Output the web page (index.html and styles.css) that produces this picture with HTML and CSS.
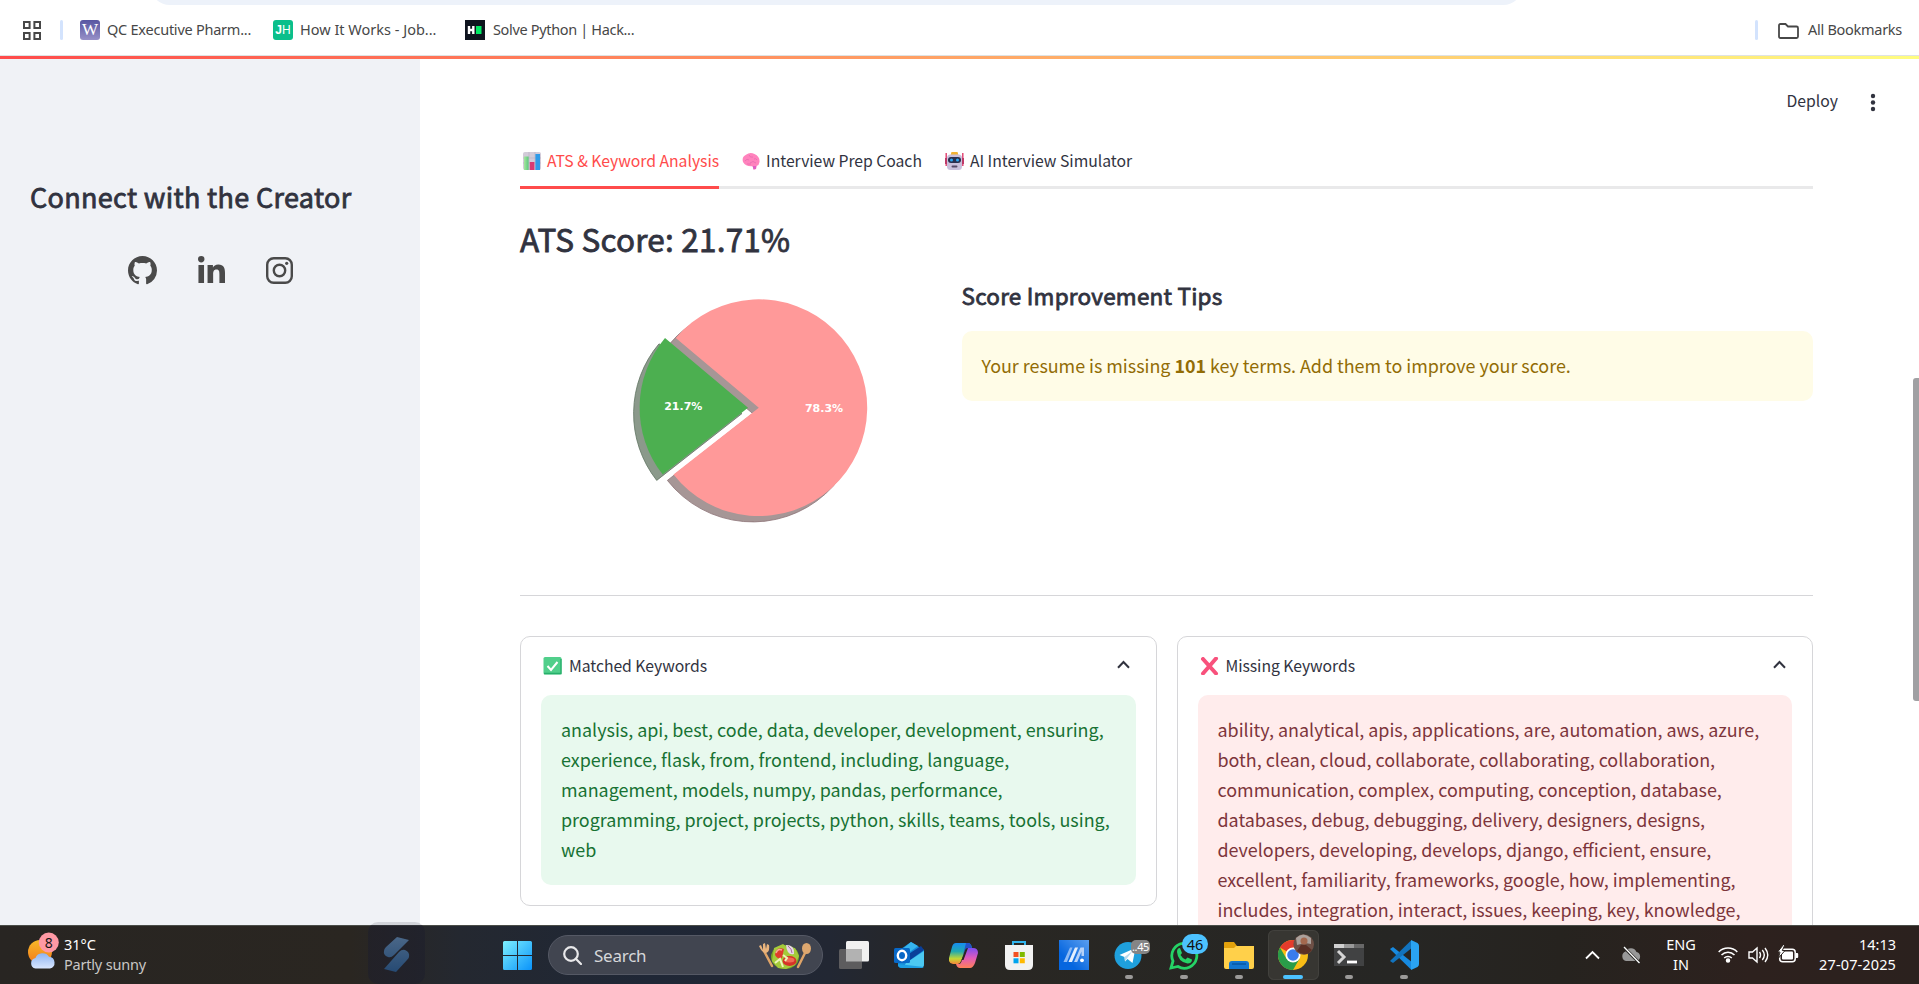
FILE: index.html
```html
<!DOCTYPE html>
<html lang="en">
<head>
<meta charset="utf-8">
<title>ATS Score</title>
<link rel="stylesheet" href="styles.css">
</head>
<body>
<header class="bookmarks">
  <div class="omnibox"></div>
  <svg class="apps" width="18" height="19" viewBox="0 0 18 19" fill="none" stroke="#474747" stroke-width="2"><rect x="1" y="1" width="5.6" height="6"/><rect x="11.4" y="1" width="5.6" height="6"/><rect x="1" y="12" width="5.6" height="6"/><rect x="11.4" y="12" width="5.6" height="6"/></svg>
  <span class="bar-sep"></span>
  <div class="bookmark bm-one"><span class="fav fav-w">W</span><span class="bm-text t-qc">QC Executive Pharm...</span></div>
  <div class="bookmark bm-two"><span class="fav fav-jh">J<small>H</small></span><span class="bm-text t-how">How It Works - Job...</span></div>
  <div class="bookmark bm-three"><svg class="fav" viewBox="0 0 20 20"><rect width="20" height="20" fill="#0e141e"/><path d="M4 6v8M8.300 6v8M4 10h4" stroke="#fff" stroke-width="2.400"/><rect x="11" y="6" width="5.500" height="8" fill="#00ea64"/></svg><span class="bm-text t-solve">Solve Python | Hack...</span></div>
  <div class="all-bookmarks"><span class="bar-sep"></span><svg width="21" height="16" viewBox="0 0 21 16" fill="none" stroke="#474747" stroke-width="1.800"><path d="M2.500 1h5l2.500 2.500h8.500q1.500 0 1.500 1.500v8.500q0 1.500-1.500 1.500H2.500Q1 15 1 13.500v-11Q1 1 2.500 1z"/></svg><span class="bm-text t-all">All Bookmarks</span></div>
</header>
<div class="accent"></div>
<div class="app">
  <aside class="sidebar">
    <h2 class="side-title">Connect with the Creator</h2>
    <nav class="social">
      <svg width="29" height="29" viewBox="0 0 16 16"><path d="M8 0C3.58 0 0 3.58 0 8c0 3.54 2.29 6.53 5.47 7.59.4.07.55-.17.55-.38 0-.19-.01-.82-.01-1.49-2.01.37-2.53-.49-2.69-.94-.09-.23-.48-.94-.82-1.13-.28-.15-.68-.52-.01-.53.63-.01 1.08.58 1.23.82.72 1.21 1.87.87 2.33.66.07-.52.28-.87.51-1.07-1.78-.2-3.64-.89-3.64-3.95 0-.87.31-1.59.82-2.15-.08-.2-.36-1.02.08-2.12 0 0 .67-.21 2.200.82.64-.18 1.320-.27 2-.27.68 0 1.360.09 2 .27 1.530-1.040 2.200-.82 2.200-.82.44 1.100.16 1.920.08 2.120.51.56.82 1.270.82 2.150 0 3.070-1.870 3.750-3.650 3.950.29.25.54.73.54 1.480 0 1.070-.01 1.930-.01 2.200 0 .21.15.46.55.38A8.013 8.013 0 0016 8c0-4.420-3.580-8-8-8z"/></svg>
      <svg width="27" height="27" viewBox="0 0 448 448"><path d="M100.280 448H7.400V148.900h92.880zM53.790 108.100C24.090 108.100 0 83.500 0 53.800a53.790 53.790 0 0 1 107.580 0c0 29.700-24.100 54.300-53.790 54.300zM447.900 448h-92.680V302.400c0-34.700-.7-79.200-48.290-79.200-48.290 0-55.690 37.700-55.690 76.700V448h-92.780V148.900h89.080v40.800h1.300c12.400-23.500 42.690-48.300 87.880-48.300 94 0 111.280 61.900 111.280 142.300V448z"/></svg>
      <svg class="insta" width="27" height="27" viewBox="0 0 27 27"><g fill="none" stroke="#4a4a4a" stroke-width="2.400"><rect x="1.200" y="1.200" width="24.600" height="24.600" rx="6.500"/><circle cx="13.500" cy="13.500" r="5.700"/></g><circle cx="20.700" cy="6.300" r="1.600"/></svg>
    </nav>
  </aside>
  <main class="main">
    <div class="toolbar"><span class="t-deploy">Deploy</span><svg width="6" height="20" viewBox="0 0 6 20" fill="#31333f"><circle cx="3" cy="3" r="2.200"/><circle cx="3" cy="9.500" r="2.200"/><circle cx="3" cy="16" r="2.200"/></svg></div>
    <div class="content">
      <div class="tabs">
        <div class="tab active"><svg width="18" height="18" viewBox="0 0 18 18"><defs><linearGradient id="cb"><stop stop-color="#a8e6a0"/><stop offset="1" stop-color="#5cc97e"/></linearGradient></defs><rect width="18" height="18" rx="2" fill="#d3ccd9"/><path d="M0 6h18M0 11h18M6 0v18M12 0v18" stroke="#bcb3c4" stroke-width=".7"/><rect x="1" y="4.500" width="4.600" height="13.500" fill="url(#cb)"/><rect x="6.800" y="10" width="4.600" height="8" fill="#d63b74"/><rect x="12.400" y="2" width="4.600" height="16" fill="#2f9be8"/></svg><span class="t-tab1">ATS &amp; Keyword Analysis</span></div>
        <div class="tab"><svg width="18" height="18" viewBox="0 0 18 18"><path d="M1 10Q-.5 5 4 2.800 8-.5 12.500 2 18 4.500 17.500 10q-.2 3-3 4l-.4 3-2.500.5-.8-3.300Q4 15 1 10z" fill="#ff83bd"/><path d="M3 9q2-3 4-1M7 3q1 3 4 2M8 11q3-3 6 0M12 7q2-1 3 1M5 12h4" fill="none" stroke="#e66cb0" stroke-width=".8"/><path d="M10.500 14l1 3.500 2.400-.5.4-3z" fill="#e060c4"/></svg><span class="t-tab2">Interview Prep Coach</span></div>
        <div class="tab"><svg width="19" height="18" viewBox="0 0 19 18"><path d="M1.200 1v13M17.800 1v13" stroke="#df3c6c" stroke-width="1.400"/><path d="M0 6h2v6H0zM17 6h2v6h-2z" fill="#bd3a68"/><path d="M6.500 0h6l1 3.500h-8z" fill="#f2b233"/><rect x="2" y="2.500" width="15" height="15.500" rx="3.500" fill="#c9c0dc"/><rect x="3" y="5" width="13" height="6" rx="3" fill="#29304f"/><circle cx="6.500" cy="8" r="1.500" fill="#2ea8f5"/><circle cx="12.500" cy="8" r="1.500" fill="#2ea8f5"/><rect x="6.500" y="13.500" width="6" height="2" rx="1" fill="#564a68"/></svg><span class="t-tab3">AI Interview Simulator</span></div>
      </div>
      <h1 class="score">ATS Score: 21.71%</h1>
      <div class="overview">
        <svg class="pie" viewBox="520 280 422 260">
          <g stroke-width=".8">
            <path d="M752.700 413.500L669.700 343.800A108.400 108.400 0 1 1 667.400 480.400Z" fill="#a69696" stroke="#8d7377"/>
            <path d="M742 413.500L656.700 480.400A108.400 108.400 0 0 1 659 343.800Z" fill="#8b998b" stroke="#5f7461"/>
          </g>
          <path d="M758.800 407.700L673.500 474.600A108.400 108.400 0 1 0 675.800 338Z" fill="#f99"/>
          <path d="M748 407.700L662.700 474.600A108.400 108.400 0 0 1 665 338Z" fill="#4caf50"/>
          <text x="683.300" y="410">21.7%</text><text x="824" y="412.300">78.3%</text>
        </svg>
        <section class="tips">
          <h3 class="tips-title">Score Improvement Tips</h3>
          <p class="alert warn">Your resume is missing <strong>101</strong> key terms. Add them to improve your score.</p>
        </section>
      </div>
      <hr class="rule">
      <div class="cards">
        <section class="card">
          <div class="card-head"><svg width="19" height="18" viewBox="0 0 19 18"><rect x=".5" width="18" height="17.500" rx="1.500" fill="#51cf8b"/><path d="M1 16.500h17V2" fill="none" stroke="#27ae6a" stroke-width="1.300"/><path d="M4.500 9l3.500 4 6.500-8" fill="none" stroke="#fff" stroke-width="2"/></svg><span class="t-match">Matched Keywords</span><svg class="chev" width="13" height="9" viewBox="0 0 13 9"><path d="M1 7.800L6.500 2 12 7.800" fill="none" stroke="#31333f" stroke-width="2"/></svg></div>
          <p class="alert ok"><span class="k1">analysis, api, best, code, data, developer, development, ensuring,<br>experience, flask, from, frontend, including, language,<br>management, models, numpy, pandas, performance,<br>programming, project, projects, python, skills, teams, tools, using,<br>web</span></p>
        </section>
        <section class="card">
          <div class="card-head"><svg width="19" height="18" viewBox="0 0 19 18"><path d="M3 2l13 14.500M16 1.500L3 16.500" stroke="#f8517c" stroke-width="4" stroke-linecap="round"/></svg><span class="t-miss">Missing Keywords</span><svg class="chev" width="13" height="9" viewBox="0 0 13 9"><path d="M1 7.800L6.500 2 12 7.800" fill="none" stroke="#31333f" stroke-width="2"/></svg></div>
          <p class="alert bad"><span class="k2">ability, analytical, apis, applications, are, automation, aws, azure,<br>both, clean, cloud, collaborate, collaborating, collaboration,<br>communication, complex, computing, conception, database,<br>databases, debug, debugging, delivery, designers, designs,<br>developers, developing, develops, django, efficient, ensure,<br>excellent, familiarity, frameworks, google, how, implementing,<br>includes, integration, interact, issues, keeping, key, knowledge,</span></p>
        </section>
      </div>
    </div>
    <div class="scroll-thumb"></div>
  </main>
</div>
<footer class="taskbar">
  <div class="weather">
    <svg width="34" height="40" viewBox="0 0 34 40"><defs><linearGradient id="sun" x2="0" y2="1"><stop stop-color="#f6b928"/><stop offset="1" stop-color="#f4791b"/></linearGradient><linearGradient id="cl" x2="0" y2="1"><stop stop-color="#8eb4f0"/><stop offset="1" stop-color="#d8e6ff"/></linearGradient></defs><circle cx="12" cy="20" r="12" fill="url(#sun)"/><path d="M7.500 36.500a5.400 5.400 0 0 1 0-10.600 7.500 7 0 0 1 13.500-1.200 6 6 0 0 1 1 11.800z" fill="url(#cl)"/><circle cx="20.800" cy="10.500" r="10" fill="#ff99a4"/><text x="20.800" y="15.600">8</text></svg>
    <div class="weather-text"><span class="t-temp">31°C</span><span class="dim t-sunny">Partly sunny</span></div>
  </div>
  <div class="tile"><svg width="27" height="35" viewBox="0 0 27 35"><defs><linearGradient id="sg" x2="0" y2="1"><stop stop-color="#4a6788"/><stop offset="1" stop-color="#264a73"/></linearGradient></defs><path d="M14 0L26 3 11 18q-3 3-6 2-5-2-4-6 0-2 2-4zM13 35L1 32 16 15q3-3 6-2 5 2 4 7 0 1-2 3z" fill="url(#sg)"/></svg></div>
  <svg class="start" width="29" height="29" viewBox="0 0 29 29"><defs><linearGradient id="win" x2="1" y2="1"><stop stop-color="#7df0ff"/><stop offset="1" stop-color="#0a93fa"/></linearGradient></defs><path d="M1.500 0H14v14H0V1.500Q0 0 1.500 0zM15 0h12.500Q29 0 29 1.500V14H15zM0 15h14v14H1.500Q0 29 0 27.500zM15 15h14v12.500q0 1.500-1.500 1.500H15z" fill="url(#win)"/></svg>
  <div class="search">
    <svg width="19" height="19" viewBox="0 0 19 19" fill="none" stroke="#e8e8ea" stroke-width="2.200"><circle cx="8" cy="8" r="6.800"/><path d="M12.800 12.800l5.200 5.200" stroke-linecap="round"/></svg>
    <span class="t-search">Search</span>
    <svg class="salad" width="52" height="27" viewBox="0 0 52 27"><path d="M5 8l8 15" stroke="#dfa468" stroke-width="2.500" stroke-linecap="round"/><path d="M0 3l2-1 2 5 0-6 2-1 1 6 1-5 2 1q1 7-3 8-4 0-7-7z" fill="#e9b47d"/><ellipse cx="26" cy="14" rx="14" ry="12" fill="#75a823"/><path d="M15 5l9-4 4 3 8 1 4 8-4 9-9 4-8-1-6-7z" fill="#a5cb3a"/><path d="M16 12q1-9 9-6l-2 9q-4 2-7-3z" fill="#df3c2d"/><path d="M17 10q2-5 6-3" fill="none" stroke="#f7ab95" stroke-width="1.500"/><ellipse cx="30.500" cy="18" rx="7" ry="5" fill="#d63328"/><ellipse cx="30.500" cy="17" rx="5" ry="2.500" fill="#f06b53"/><path d="M27 2q9 0 8 9-7 2-8-9z" fill="#e8d6e7"/><path d="M29 3q4 3 4 7" fill="none" stroke="#a56b9d"/><path d="M16 20l5-4 3 8M24 12l4 3-2 3" stroke="#edf5b9" stroke-width="2" fill="none"/><path d="M39 24l8-16" stroke="#dfa468" stroke-width="2.500" stroke-linecap="round"/><ellipse cx="47.500" cy="5.500" rx="4.500" ry="5.500" fill="#dda76f"/></svg>
  </div>
  <div class="dock">
    <div class="slot"><svg width="30" height="30" viewBox="0 0 30 30"><rect x="7" y="1" width="23" height="20.500" rx="1.500" fill="#f1f1f1"/><rect y="9" width="23" height="20" rx="1.500" fill="#5d5c5e"/><rect x="7" y="9" width="16" height="12.500" fill="#b2b2b2"/></svg></div>
    <div class="slot"><svg width="30" height="30" viewBox="0 0 30 30"><path d="M4 11L17 2l13 8v14q0 4-4 4H8q-4 0-4-4z" fill="#168bd8"/><path d="M6 11L17 2l7 4-14 10z" fill="#36b5ee"/><path d="M10 17L27 6l3 4-18 13z" fill="#0a3f99"/><path d="M12 23l18-12v13q0 4-4 4H9z" fill="#4cc9f2"/><path d="M4 24l26 3q-1 1-4 1H8q-3 0-4-2z" fill="#1e9fe2"/><rect y="8" width="16" height="15" rx="1.500" fill="#0868c7"/><ellipse cx="8" cy="15.500" rx="4.200" ry="4.700" fill="none" stroke="#fff" stroke-width="2.400"/></svg></div>
    <div class="slot"><svg width="30" height="30" viewBox="0 0 30 30"><defs><linearGradient id="c1" x2="0" y2="1"><stop stop-color="#168cf0"/><stop offset=".4" stop-color="#20a9b0"/><stop offset=".75" stop-color="#c5d733"/><stop offset="1" stop-color="#f6853a"/></linearGradient><linearGradient id="c2" x2="0" y2="1"><stop stop-color="#7e4df0"/><stop offset=".5" stop-color="#e15bb9"/><stop offset="1" stop-color="#ff8058"/></linearGradient></defs><path d="M7 3h12q3 0 4 5h-4q-2 0-3 4l-4 9q-1 3-3 3H4q-5-1-4-6L3 7q1-4 4-4z" fill="url(#c1)"/><path d="M19 8h5q5 0 5 5l-3 10q-2 5-5 5H11q-3 0-4-4h3q2 0 3-4l3-9q1-3 3-3z" fill="url(#c2)"/><path d="M17 3h2q3 0 4 5h-4q-3 0-4 5l-1 2z" fill="#2451c9"/><path d="M12.500 20l3.500-10q.5-2 3-2l-4.500 12z" fill="#292622"/></svg></div>
    <div class="slot"><svg width="30" height="30" viewBox="0 0 30 30"><path d="M9 6V2h12v4" fill="none" stroke="#31b4ed" stroke-width="2"/><path d="M1 5h28v20q0 5-5 5H6q-5 0-5-5z" fill="#f2f2f2"/><path d="M9.500 12H14.500v5H9.500z" fill="#f25022"/><path d="M15.800 12h5v5h-5z" fill="#7fba00"/><path d="M9.500 18.300h5v5h-5z" fill="#00a4ef"/><path d="M15.800 18.300h5v5h-5z" fill="#ffb900"/></svg></div>
    <div class="slot"><svg width="30" height="30" viewBox="0 0 30 30"><defs><linearGradient id="mg" x1="0" y1="1" x2="1" y2="0"><stop offset=".3" stop-color="#0666df"/><stop offset="1" stop-color="#5a9eef"/></linearGradient></defs><rect width="30" height="30" fill="url(#mg)"/><path d="M4.500 22L11 7.500h2.500L8 22z" fill="#8dbaf5"/><path d="M9.500 22L16 7.500h3L13 22z" fill="#e4effd"/><path d="M15 22l6.500-14.500H25V16h-2.500v-4.500L18.200 22z" fill="#b5d1f8"/><circle cx="23" cy="20.300" r="1.900" fill="#fff"/></svg></div>
    <div class="slot"><svg width="30" height="30" viewBox="0 0 30 30"><circle cx="14" cy="15.500" r="13.500" fill="#1fa0dc"/><path d="M5.500 15l16-7-3 15-5-4-2.500 2.500-.5-4.500z" fill="#fff"/><path d="M10.500 17l8-6-6 8-1.500 2.500z" fill="#b7d9ed"/></svg><span class="badge gray">..45</span><i class="dot"></i></div>
    <div class="slot"><svg width="30" height="30" viewBox="0 0 30 30"><path d="M2 28l2-7A12.500 12.500 0 1 1 9 26.500z" fill="none" stroke="#25d366" stroke-width="2.800"/><path d="M8 12q0-4 3-4l2 5-1.500 2q2 3.500 5 4.500l2-2 4.500 2q0 4-4.500 4Q9 22 8 12z" fill="#25d366"/></svg><span class="badge blue">46</span><i class="dot"></i></div>
    <div class="slot"><svg width="30" height="30" viewBox="0 0 30 30"><path d="M0 3q0-1 1-1h9l3 4v4H0z" fill="#e2a10c"/><path d="M0 8h10l2-2h18v21q0 2-2 2H2q-2 0-2-2z" fill="#ffd04a"/><path d="M5 29v-5q0-3 3-3h14q3 0 3 3v5z" fill="#1375cf"/><path d="M8 24h14" stroke="#08539c" stroke-width="1.300"/></svg><i class="dot"></i></div>
    <div class="slot current"><svg width="36" height="36" viewBox="0 0 36 36"><circle cx="15" cy="21" r="15" fill="#f9bd16"/><path d="M15 21L2 13.500A15 15 0 0 1 28 13.500H15z" fill="#e53b2c"/><path d="M2 13.500A15 15 0 0 0 15 36l6.500-11.300L15 21 8.600 25z" fill="#2a9c49"/><circle cx="15" cy="21" r="7.500" fill="#fff"/><circle cx="15" cy="21" r="5.800" fill="#397cec"/><circle cx="25.700" cy="10.500" r="10.300" fill="#6e5046"/><path d="M18 4q7-7 15 0v6l-6-1-8 2z" fill="#aba19c"/><path d="M19 17l4-6h5l6 5q-6 8-15 1z" fill="#5c2f24"/><circle cx="26" cy="7" r="3.500" fill="#a4684e"/></svg><i class="dot on"></i></div>
    <div class="slot"><svg width="30" height="30" viewBox="0 0 30 30"><path d="M0 4h30v22H0z" fill="#414243"/><path d="M0 4h10v4H0z" fill="#d0d0d0"/><path d="M10 4h10v4H10z" fill="#999"/><path d="M20 4h10v4H20z" fill="#686868"/><path d="M4 11l6 6-6 6" fill="none" stroke="#d5d5d5" stroke-width="3"/><path d="M13 22h10" stroke="#fff" stroke-width="2.800"/></svg><i class="dot"></i></div>
    <div class="slot"><svg width="30" height="30" viewBox="0 0 30 30"><path d="M1 9l3-2 20 16-2 6.500z" fill="#178ae0"/><path d="M1 21l3 2L24 7 22 .5z" fill="#1273bd"/><path d="M22 0l6.500 3Q30 4 30 6v18q0 2-1.500 3L22 30z" fill="#2aa3f2"/></svg><i class="dot"></i></div>
  </div>
  <div class="tray">
    <svg class="up" width="15" height="10" viewBox="0 0 15 10"><path d="M1 8.500L7.500 2 14 8.500" fill="none" stroke="#fff" stroke-width="1.800"/></svg>
    <svg class="cloud" width="21" height="18" viewBox="0 0 21 18"><path d="M5 15a5 5 0 0 1-.5-9.500 6 6 0 0 1 11 .5A4.700 4.700 0 0 1 16 15z" fill="#989898"/><path d="M2.500 1l16 16" stroke="#262522" stroke-width="3"/><path d="M3 1l15.500 16" stroke="#fff" stroke-width="1.300"/></svg>
    <div class="lang"><span>ENG</span><span>IN</span></div>
    <svg class="wifi" width="20" height="17" viewBox="0 0 20 17" fill="none" stroke="#fff" stroke-width="1.500"><path d="M.7 6a13 13 0 0 1 18.600 0M3.500 9a9 9 0 0 1 13 0M6.200 12a5.500 5.500 0 0 1 7.600 0"/><circle cx="10" cy="14.500" r="1.500" fill="#fff"/></svg>
    <svg class="vol" width="21" height="18" viewBox="0 0 21 18" fill="none" stroke="#fff" stroke-width="1.400"><path d="M1 6h3.500L9 2v14l-4.500-4H1z"/><path d="M11.500 6q2 3 0 6M14.300 4q4 5 0 10M17 2q5.500 7 0 14"/></svg>
    <svg class="bat" width="21" height="18" viewBox="0 0 21 18"><rect x="1.700" y="4.200" width="15.500" height="12.500" rx="3" fill="none" stroke="#fff" stroke-width="1.500"/><rect x="4" y="6.500" width="11" height="8" rx="1" fill="#fff"/><path d="M18 8h1.200q1 0 1 1v3q0 1-1 1H18z" fill="#fff"/><path d="M5.500-.5L-.5 7H2l-1.500 6L7 5.500H4.300L7-.5z" fill="#fff" stroke="#2b231f"/></svg>
    <div class="clock"><span class="t-time">14:13</span><span class="t-date">27-07-2025</span></div>
  </div>
</footer>
</body>
</html>
```
FILE: styles.css
```css
* { box-sizing: border-box; }
body { margin: 0; width: 1919px; height: 984px; overflow: hidden; display: flex; flex-direction: column; background: #fff; color: #31333f; font-family: "Noto Sans CJK SC", "Noto Sans", sans-serif; font-size: 15.75px; line-height: 28px; }
svg { display: block; flex: none; }
span { white-space: nowrap; }
h1, h2, h3, p, hr { margin: 0; border: 0; }
h1, h2, h3 { font-weight: 400; -webkit-text-stroke: .8px currentColor; white-space: nowrap; }

.bookmarks { position: relative; flex: none; height: 56px; padding: 19px 17px 0 23px; display: flex; align-items: flex-start; border-bottom: 1px solid #dfe3e3; }
.omnibox { position: absolute; left: 150px; top: -35px; width: 1373px; height: 40px; border-radius: 20px; background: #edf2fa; }
.apps { margin-top: 2px; }
.bar-sep { width: 3px; height: 20px; margin: 1px 0 0 19px; border-radius: 2px; background: #d3e3fd; }
.bookmark { display: flex; gap: 8px; }
.bm-one { margin-left: 17px; width: 193px; gap: 7px; }
.bm-two { width: 192px; gap: 7px; }
.bm-text { font: 14.5px/20px "Noto Sans", sans-serif; color: #474747; }
.t-qc { letter-spacing: -.24px; }
.t-solve { letter-spacing: -.34px; }
.t-all { letter-spacing: -.28px; }
.fav { width: 20px; height: 20px; margin-top: 1px; text-align: center; color: #fff; }
.fav-w { border-radius: 3px; background: linear-gradient(#5756a2, #9790c7); font: 17px/20px "Liberation Serif", serif; }
.fav-jh { border-radius: 3px; background: #0abf8b; font: bold 12px/20px "Liberation Sans", sans-serif; }
.fav-jh small { font-weight: normal; font-size: 12px; }
.all-bookmarks { margin-left: auto; display: flex; }
.all-bookmarks svg { margin: 4px 9px 0 20px; }
.accent { flex: none; height: 3px; background: linear-gradient(90deg, #ff4b4b, #fffd80); }

.app { flex: none; height: 866px; display: flex; overflow: hidden; }
.sidebar { width: 420px; background: #f0f2f6; padding-top: 120px; }
.side-title { padding-left: 30px; font-size: 27px; line-height: 36px; letter-spacing: .32px; }
.social { display: flex; justify-content: center; gap: 41px; margin-top: 41px; fill: #4a4a4a; }
.insta { margin-top: 1px; }
.main { position: relative; flex: 1; overflow: hidden; }
.toolbar { display: flex; justify-content: flex-end; padding: 28px 43px 0 0; }
.toolbar svg { margin: 6px 0 0 32px; }
.content { width: 1293px; margin-left: 100px; }
.tabs { display: flex; gap: 20px; height: 43px; margin-top: 31px; border-bottom: 3px solid #e9e9ea; }
.tab { display: flex; gap: 6px; height: 43px; padding-left: 3px; }
.tab svg { margin-top: 6px; }
.tab span { padding-top: 1px; letter-spacing: -.03px; }
.tab.active { color: #ff4b4b; border-bottom: 3px solid #ff4b4b; }
.score { margin-top: 28px; font-size: 31.5px; line-height: 42px; letter-spacing: .22px; }
.overview { margin-top: 21px; height: 315px; display: flex; gap: 19.5px; }
.pie { width: 422px; height: 260px; }
.pie text { font: bold 11px "DejaVu Sans", sans-serif; fill: #fff; text-anchor: middle; }
.tips { flex: 1; }
.tips-title { font-size: 22.5px; line-height: 30px; letter-spacing: .22px; }
.alert { padding: 19px 20px 21px; border-radius: 10px; font-size: 17.92px; line-height: 30px; white-space: nowrap; }
.warn { margin-top: 21px; background: #fffce7; color: #926c05; letter-spacing: -.02px; }
.rule { height: 1px; background: #d6d6d9; }
.cards { display: flex; gap: 20px; margin-top: 40px; align-items: flex-start; }
.card { flex: 1; min-width: 0; border: 1px solid #d6d6d9; border-radius: 10px; padding: 14px 20px 20px; }
.card-head { display: flex; height: 44px; padding: 0 6px 0 2px; }
.card-head span { padding-top: 1px; letter-spacing: -.06px; }
.card-head > svg:first-child { margin: 6px 7px 0 0; }
.card-head .chev { margin: 9px 0 0 auto; }
.ok { background: #e8f9ee; color: #177233; }
.bad { background: #ffecec; color: #7d353b; }
.scroll-thumb { position: absolute; right: 0; top: 319px; width: 6px; height: 323px; border-radius: 3px 0 0 3px; background: #a0a0a3; }

.taskbar { position: relative; flex: none; height: 59px; display: flex; border-top: 1px solid #4a4d48; background: linear-gradient(90deg, #282522 0, #2a2621 350px, #242830 460px, #1f2736 650px, #222733 830px, #292723 960px, #262624 1400px, #26231f 1560px, #2d211e 1750px, #2b211e 100%); color: #fff; font: 14.5px/20px "Noto Sans", sans-serif; }
.weather { display: flex; width: 368px; padding: 6px 0 0 28px; }
.weather text { font: 14px "Noto Sans", sans-serif; text-anchor: middle; fill: #151515; }
.weather-text { display: flex; flex-direction: column; padding: 2px 0 0 2px; }
.t-sunny { letter-spacing: -.2px; }
.dim { color: #c9c7c5; }
.tile { position: relative; width: 57px; height: 62px; margin-top: -4px; padding: 15px 0 0 15px; border-radius: 10px; background: linear-gradient(rgba(28, 29, 44, .14) 3px, rgba(28, 29, 44, .5) 3px); }
.start { margin: 15px 0 0 78px; }
.search { width: 275px; height: 40px; margin: 9px 0 0 16px; border: 1px solid #555965; border-radius: 20px; background: #414550; display: flex; padding: 10px 11px 0 14px; font-size: 17px; color: #d6d7da; }
.t-search { margin-left: 12px; letter-spacing: -.25px; }
.salad { margin: -3px 0 0 auto; }
.dock { display: flex; margin-left: 3px; }
.slot { position: relative; width: 55px; height: 58px; display: flex; justify-content: center; padding-top: 14px; }
.current { width: 51px; height: 50px; margin: 4px 2px 0; padding: 4px 0 0 5px; border-radius: 6px; background: #373632; box-shadow: inset 0 0 0 1px #42413d; }
.dot { position: absolute; left: 24px; top: 49px; width: 8px; height: 4px; border-radius: 2px; background: #9b9a99; }
.dot.on { left: 15px; top: 45px; width: 20px; background: #4cc2ff; }
.badge { position: absolute; top: 8px; color: #111; text-align: center; border-radius: 10px; }
.gray { left: 30px; top: 14px; width: 19px; height: 14px; border-radius: 5px; background: #858585; color: #fff; font-size: 11px; line-height: 14px; letter-spacing: -.4px; }
.blue { left: 26px; width: 26px; height: 20px; background: #4cc2ff; }
.tray { display: flex; margin-left: auto; padding-right: 23px; align-items: flex-start; }
.up { margin-top: 24px; }
.cloud { margin: 20px 24px 0 21px; }
.lang { display: flex; flex-direction: column; text-align: center; width: 30px; margin: 8px 22px 0 0; }
.wifi { margin-top: 20px; }
.vol { margin: 20px 9px 0 10px; }
.bat { margin-top: 19px; }
.clock { display: flex; flex-direction: column; width: 78px; margin: 8px 0 0 19px; text-align: right; align-items: flex-end; }
.t-date { letter-spacing: .12px; }
```
